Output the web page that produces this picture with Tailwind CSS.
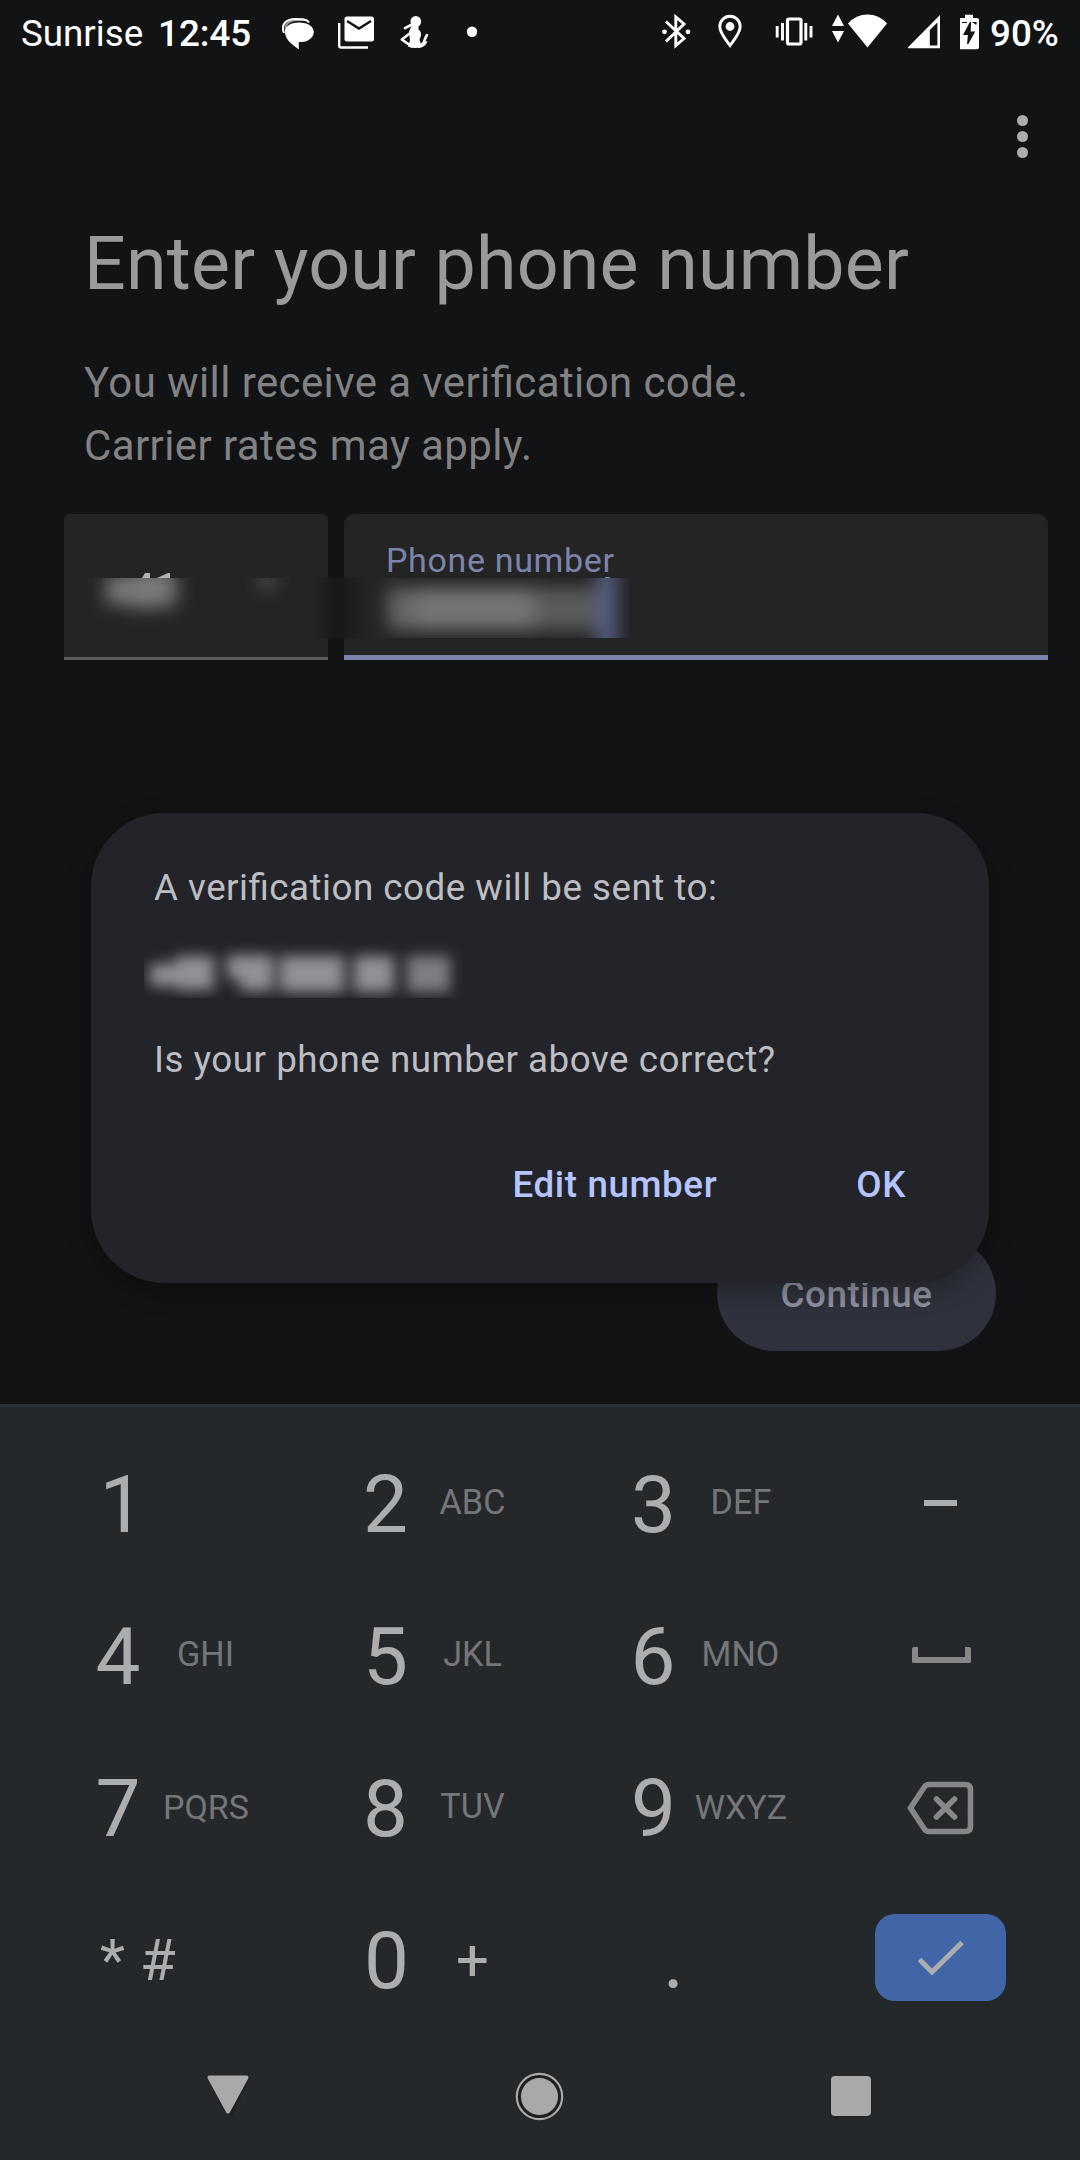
<!DOCTYPE html>
<html lang="en">
<head>
<meta charset="utf-8">
<title>Enter your phone number</title>
<script src="https://cdn.jsdelivr.net/npm/@tailwindcss/browser@4"></script>
</head>
<body class="bg-[#121315] font-[Roboto,sans-serif]">
<div class="relative flex h-[2160px] w-[1080px] flex-col overflow-hidden">

  <!-- status bar -->
  <header class="flex h-[66px] items-start justify-between pl-[21px] pr-[21px] text-white">
    <div class="flex h-[66px]">
      <span class="w-[137px] text-[36.75px] leading-[68px]">Sunrise</span>
      <span class="w-[124px] text-[36.75px] font-medium leading-[68px]">12:45</span>
      <svg class="h-[66px] w-[32px]" viewBox="282 0 32 66"><path d="M284 33C280 23 288 19 295 19c7 0 12 0 14 3.500" fill="none" stroke="#fff" stroke-width="2"/><path d="M286 31C284 23 291 20 297 20h10" fill="none" stroke="#fff" stroke-width="2" opacity=".6"/><path d="M299 22.500c9 0 14.800 4 14.800 9.500s-6 10-12 10h-3v7.500c-8-6-13.800-10.500-13.800-17.500 0-5.500 5-9.500 14-9.500z" fill="#fff"/></svg>
      <svg class="ml-6 h-[66px] w-[37px]" viewBox="338 0 37 66"><path d="M339.2 23v22.500q0 2 2 2H368" fill="none" stroke="#fff" stroke-width="2.400"/><rect x="344.500" y="16.500" width="29.500" height="25" rx="2.500" fill="#fff"/><path d="M347 21l12 7.500 12-7.500" fill="none" stroke="#121315" stroke-width="2.400"/></svg>
      <svg class="ml-6 h-[66px] w-[32px]" viewBox="399 0 32 66" fill="#fff"><ellipse cx="415.800" cy="21.500" rx="5.300" ry="5.500"/><path d="M412.500 24h6v5.500q3 2.500 2.500 6l-1.500 4 2 7q-7 3-13.500 0l2-6-1-9z"/><path d="M411 25l-6 3.200M411 32.500L401.800 39.500 411 46M419 46.500q4-.5 4.800-4t3.200-7.500" stroke="#fff" stroke-width="2.600" fill="none" stroke-linecap="round" stroke-linejoin="round"/><path d="M418 48q8-1 9.500-7l-6.500 2z"/></svg>
      <svg class="ml-[35px] h-[66px] w-3" viewBox="466 0 12 66" fill="#fff"><circle cx="472" cy="31.800" r="5.200"/></svg>
    </div>
    <div class="flex h-[66px]">
      <svg class="h-[66px] w-[30px]" viewBox="662 0 30 66"><g fill="none" stroke="#fff" stroke-width="2.900"><path d="M666 21.500l18 17-8.200 7V17l8.200 7-18 17.500"/></g><circle cx="664.500" cy="31.800" r="2.400" fill="#fff"/><circle cx="688" cy="31.800" r="2.400" fill="#fff"/></svg>
      <svg class="ml-[26px] h-[66px] w-[26px]" viewBox="718 0 26 66"><path d="M730 45.500c-5-7-10.200-12.500-10.200-19a10.200 10.200 0 0 1 20.400 0c0 6.500-5.200 12-10.200 19z" fill="none" stroke="#fff" stroke-width="2.900"/><circle cx="730" cy="26.500" r="4.400" fill="#fff"/></svg>
      <svg class="ml-[30px] h-[66px] w-[40px]" viewBox="773 0 40 66"><rect x="786.500" y="19" width="13.500" height="25" rx="1.500" fill="none" stroke="#fff" stroke-width="3.200"/><path d="M776.200 26v11.500M781.500 23v17.500M804.800 23v17.500M810 26v11.500" stroke="#fff" stroke-width="2.900"/></svg>
      <svg class="ml-[18px] h-[66px] w-[57px]" viewBox="832 0 57 66" fill="#fff"><path d="M832 26l6-11.500 6 11.500zM832 31h12l-6 11.500zM848 23.500q8-9 19.500-9T887 23.500l-19.500 24z"/></svg>
      <svg class="ml-[19px] h-[66px] w-[33px]" viewBox="908 0 33 66" fill="#fff"><path fill-rule="evenodd" d="M907 48.300l33-33.300v33.300zM929.800 30V45.500h7.600V22.500z"/></svg>
      <svg class="ml-[19px] h-[66px] w-[20px]" viewBox="960 0 20 66"><path d="M965 18v-3.200h8V18h4q2 0 2 2v27.200q0 2-2 2h-16q-2 0-2-2V20q0-2 2-2z" fill="#fff"/><path d="M970.500 22l-6.500 12.500h4.500l-.8 9.500 6.500-12h-4.200zM962 22.500h5M972.500 22.500h3.500v2" fill="#121315" stroke="#121315" stroke-width="1.200"/></svg>
      <span class="ml-[10.500px] w-[69px] text-[36.750px] font-medium leading-[68px]">90%</span>
    </div>
  </header>

  <!-- overflow menu -->
  <div class="flex h-[140px] flex-col items-end gap-[5px] pr-[52px] pt-[49px]">
    <i class="size-[11px] rounded-full bg-[#acacac]"></i>
    <i class="size-[11px] rounded-full bg-[#acacac]"></i>
    <i class="size-[11px] rounded-full bg-[#acacac]"></i>
  </div>

  <main class="flex h-[1198px] flex-col">
    <h1 class="mt-[8px] h-[100px] pl-[84px] text-[73.500px] leading-[100px] tracking-[0.200px] text-[#9a9a9b]">Enter your phone number</h1>
    <p class="mt-[37px] pl-[84px] text-[42px] leading-[63px] tracking-[0.400px] text-[#828283] [font-feature-settings:'liga'_1]">You will receive a verification code.<br>Carrier rates may apply.</p>

    <div class="relative mt-[37px] flex h-[146px] gap-4 pl-16 pr-8">
      <div class="relative w-[264px] overflow-hidden rounded-t-[5px] border-b-[3px] border-[#5b5b5b] bg-[#242425]">
        <svg class="h-[64px] w-[264px]" viewBox="64 514 264 64"><path d="M142 578l3-5h5v5zM157 578l11-5h2v5z" fill="#b3b3b3"/></svg>
      </div>
      <div class="flex-1 rounded-t-[10px] border-b-[5px] border-[#7c84ab] bg-[#242425] pl-[42px] pt-[26px]">
        <span class="block text-[34px] leading-[40px] tracking-[0.650px] text-[#7c84ab]">Phone number</span>
      </div>
      <!-- redacted band across both fields -->
      <svg class="absolute left-16 top-[63px] h-[61px] w-[568px]" viewBox="64 577 568 61">
        <defs>
          <filter id="b" x="-50%" y="-50%" width="200%" height="200%"><feGaussianBlur stdDeviation="9"/></filter>
          <linearGradient id="g"><stop offset="0" stop-color="#242425"/><stop offset=".42" stop-color="#19191b"/><stop offset=".52" stop-color="#19191b"/><stop offset="1" stop-color="#242425"/></linearGradient>
          <clipPath id="c"><path d="M64 578h566v60H64z"/></clipPath>
        </defs>
        <path d="M605 577h5v1h-5z" fill="#7c84ab"/>
        <g clip-path="url(#c)">
          <path d="M312 578h55v60h-55z" fill="url(#g)"/>
          <g filter="url(#b)">
            <path d="M106 576h24v28h-24zM130 570h28v38h-28zM158 570h18v36h-18z" fill="#7a7a7a"/>
            <path d="M256 574h22l-11 19z" fill="#606060"/>
            <path d="M388 588h28v42h-28z" fill="#666"/>
            <path d="M416 588h117v42h-117z" fill="#747474"/>
            <path d="M533 588h64v42h-64z" fill="#5c5c5c"/>
            <path d="M598 552h18v112h-18z" fill="#5a6288"/>
          </g>
        </g>
      </svg>
    </div>

    <div class="mt-[576px] flex justify-end pr-[84px]">
      <button class="h-[115px] w-[279px] rounded-full bg-[#2f323c] text-[36.750px] font-medium leading-[117px] tracking-[0.550px] text-[#9091a0]">Continue</button>
    </div>
  </main>

  <!-- keyboard -->
  <section class="h-[756px] border-t-[3px] border-[#2c3135] bg-[#25282b] pt-5 text-[#adadad]">
    <div class="grid auto-rows-[152px] grid-cols-[267.500px_267.500px_267.500px_100px] pl-[88px]">
      <div class="flex items-center"><span class="w-[68px] pt-[4px] text-center text-[80px]">1</span></div>
      <div class="flex items-center"><span class="w-[60px] pt-[4px] text-center text-[80px]">2</span><span class="w-[114px] text-center text-[34.200px] text-[#757677]">ABC</span></div>
      <div class="flex items-center"><span class="w-[61px] pt-[4px] text-center text-[80px]">3</span><span class="w-[114px] text-center text-[34.200px] text-[#757677]">DEF</span></div>
      <div class="flex items-center justify-center"><i class="h-[6px] w-[33px] bg-[#adadad]"></i></div>

      <div class="flex items-center"><span class="w-[60px] pt-[4px] text-center text-[80px]">4</span><span class="w-[115px] text-center text-[34.200px] text-[#757677]">GHI</span></div>
      <div class="flex items-center"><span class="w-[60px] pt-[4px] text-center text-[80px]">5</span><span class="w-[114px] text-center text-[34.200px] text-[#757677]">JKL</span></div>
      <div class="flex items-center"><span class="w-[60px] pt-[4px] text-center text-[80px]">6</span><span class="w-[115px] text-center text-[34.200px] text-[#757677]">MNO</span></div>
      <div class="flex items-center justify-center pb-[1px] pl-[2px]"><i class="h-[16px] w-[59px] rounded-[2px] border-x-[6px] border-b-[6px] border-[#868787]"></i></div>

      <div class="flex items-center"><span class="w-[60px] pt-[4px] text-center text-[80px]">7</span><span class="w-[116px] text-center text-[34px] text-[#757677]">PQRS</span></div>
      <div class="flex items-center"><span class="w-[60px] pt-[4px] text-center text-[80px]">8</span><span class="w-[114px] text-center text-[34.200px] text-[#757677]">TUV</span></div>
      <div class="flex items-center"><span class="w-[61px] pt-[4px] text-center text-[80px]">9</span><span class="w-[114px] whitespace-nowrap text-center text-[34px] text-[#757677]">WXYZ</span></div>
      <div class="flex items-center justify-center pt-[1px]"><svg class="h-[54px] w-[68px]" viewBox="0 0 68 54" fill="none" stroke="#868787" stroke-width="5.600"><path d="M3.500 27L17 6.500Q19 3.500 22 3.500H58.500Q63.500 3.500 63.500 8.500V45.500Q63.500 50.500 58.500 50.500H22Q19 50.500 17 47.500Z"/><path d="M31 18l18 18M49 18l-18 18" stroke-linecap="round" transform="translate(-1.500 0)"/></svg></div>

      <div class="flex items-center gap-[15px] pl-[12px] pt-[2px] text-[58px]"><span>*</span><span>#</span></div>
      <div class="flex items-center"><span class="w-[60px] translate-x-[1px] pt-[4px] text-center text-[80px]">0</span><span class="w-[114px] pt-[2px] text-center text-[58px]">+</span></div>
      <div class="flex items-center pl-[40px] pt-[4px]"><span class="text-[80px]">.</span></div>
      <div class="flex items-center justify-center pb-[3px]"><div class="flex h-[87px] w-[131px] shrink-0 items-center justify-center rounded-[20px] bg-[#4166a8]"><svg class="h-[36px] w-[47px]" viewBox="0 0 47 36"><path d="M2.500 19.500L15 32 45 2.500" fill="none" stroke="#adadad" stroke-width="5"/></svg></div></div>
    </div>

    <!-- navigation bar -->
    <nav class="flex h-[122px] items-center pl-[207px]">
      <svg class="h-[44px] w-[44px]" viewBox="0 0 44 44"><path d="M6 5.500h34L24 39z" fill="#1e2023" stroke="#1e2023" stroke-width="4"/><path d="M2.500 3.500h37L21 37.500z" fill="#a8a9ab" stroke="#a8a9ab" stroke-width="4" stroke-linejoin="round"/></svg>
      <svg class="ml-[264px] h-[49px] w-[49px]" viewBox="0 0 49 49"><circle cx="24.500" cy="24.500" r="21.500" fill="none" stroke="#1b1d1f" stroke-width="4"/><circle cx="24.500" cy="24.500" r="22.700" fill="none" stroke="#a8a9ab" stroke-width="2.200"/><circle cx="24.500" cy="24.500" r="18.500" fill="#a8a9ab"/></svg>
      <i class="ml-[267px] size-10 rounded-[4px] bg-[#a8a9ab] shadow-sm"></i>
    </nav>
  </section>

  <!-- confirmation dialog -->
  <div class="absolute left-[91px] top-[813px] flex h-[470px] w-[898px] flex-col rounded-[73.500px] bg-[#232429] pl-[63px] pr-[83px] pt-[50px] text-[36.750px] leading-[50px] text-[#bdbdc2] shadow-[0_8px_26px_rgba(0,0,0,0.3)]">
    <p class="tracking-[0.490px] [font-feature-settings:'liga'_1]">A verification code will be sent to:</p>
    <svg class="-ml-[10px] mt-[28px] h-[57px] w-[330px]" viewBox="144 941 330 57">
      <defs><filter id="d" x="-20%" y="-80%" width="140%" height="260%" color-interpolation-filters="sRGB"><feGaussianBlur stdDeviation="7"/></filter></defs>
      <g filter="url(#d)" fill="#919196"><path d="M150 964h26v22h-26zM176 956h38v34h-38zM227 955h46v24h-46zM240 977h33v14h-33zM280 956h64v36h-64zM354 956h40v36h-40z"/><path d="M407 956h43v36h-43z" fill="#7e7e83"/></g>
    </svg>
    <p class="mt-[37px] tracking-[0.520px]">Is your phone number above correct?</p>
    <div class="mt-[75px] flex justify-end gap-[139px] font-medium tracking-[0.600px] text-[#b6c4ff]"><span>Edit number</span><span>OK</span></div>
  </div>
</div>
</body>
</html>
